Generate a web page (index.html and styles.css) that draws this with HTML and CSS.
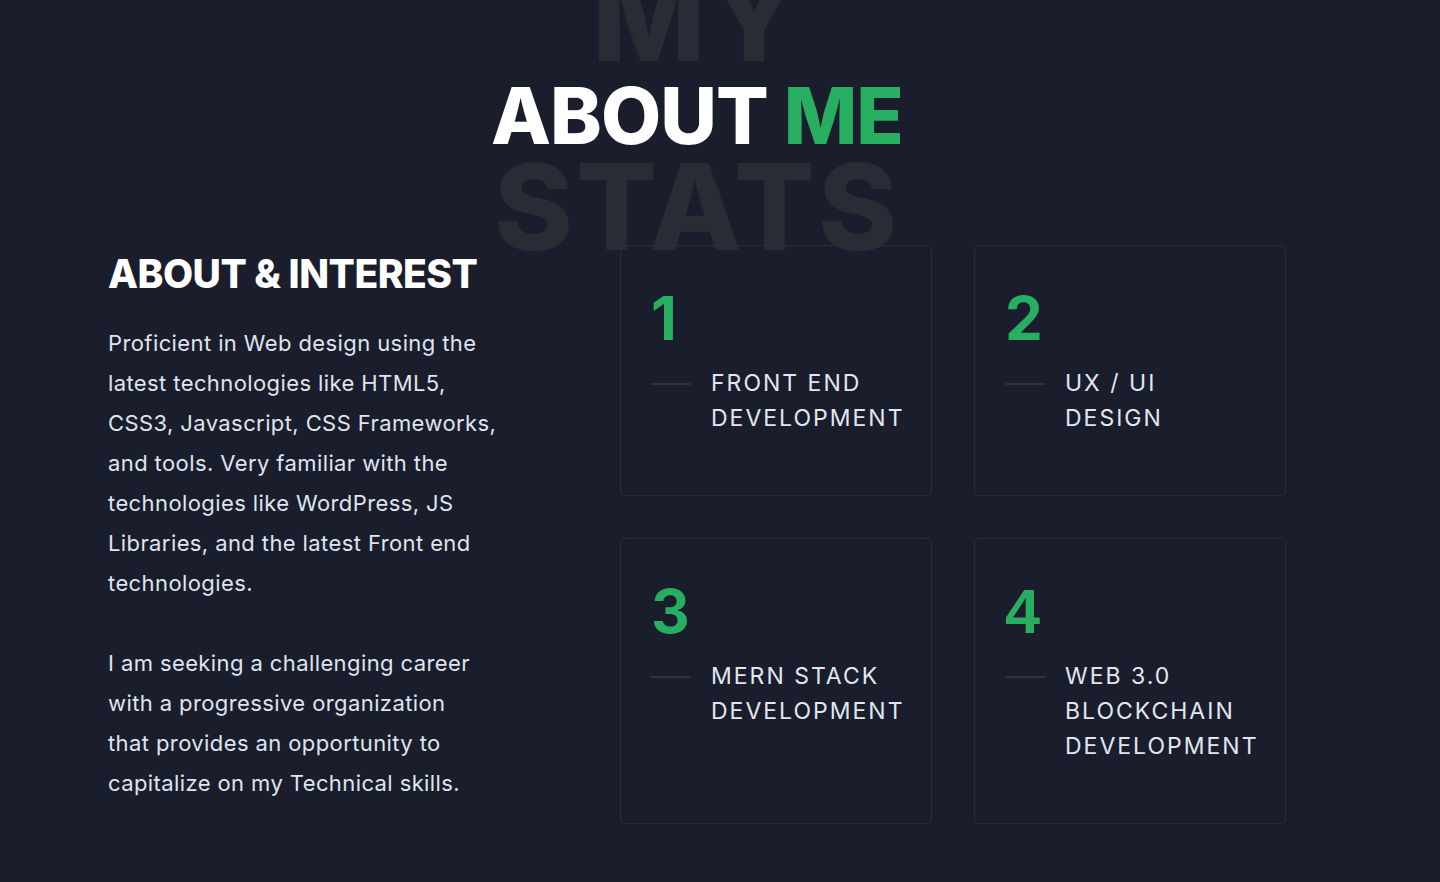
FILE: index.html
```html
<!DOCTYPE html>
<html lang="en">
<head>
<meta charset="utf-8">
<title>About Me</title>
<link rel="stylesheet" href="styles.css">
</head>
<body>
<section class="about">
  <header class="heading">
    <div class="bg-text" aria-hidden="true"><span class="bg-my">MY</span><span class="bg-stats">STATS</span></div>
    <h1 class="title">ABOUT <span class="accent">ME</span></h1>
  </header>
  <div class="content">
    <div class="intro">
      <h2 class="intro-title">ABOUT &amp; INTEREST</h2>
      <p class="intro-text">Proficient in Web design using the<br>latest technologies like HTML5,<br>CSS3, Javascript, CSS Frameworks,<br>and tools. Very familiar with the<br>technologies like WordPress, JS<br>Libraries, and the latest Front end<br>technologies.</p>
      <p class="intro-text">I am seeking a challenging career<br>with a progressive organization<br>that provides an opportunity to<br>capitalize on my Technical skills.</p>
    </div>
    <div class="stats">
      <div class="card">
        <div class="num">1</div>
        <div class="label"><span class="dash"></span><span class="label-text">FRONT END<br>DEVELOPMENT</span></div>
      </div>
      <div class="card">
        <div class="num">2</div>
        <div class="label"><span class="dash"></span><span class="label-text">UX / UI<br>DESIGN</span></div>
      </div>
      <div class="card">
        <div class="num">3</div>
        <div class="label"><span class="dash"></span><span class="label-text">MERN STACK<br>DEVELOPMENT</span></div>
      </div>
      <div class="card">
        <div class="num num-alt">4</div>
        <div class="label"><span class="dash"></span><span class="label-text">WEB 3.0<br>BLOCKCHAIN<br>DEVELOPMENT</span></div>
      </div>
    </div>
  </div>
</section>
</body>
</html>
```
FILE: styles.css
```css
* { box-sizing: border-box; }
html, body {
  margin: 0;
  padding: 0;
  background: #1a1d2b;
}
body {
  font-family: "Inter", "Open Sans", sans-serif;
  color: #dfe4ee;
  height: 882px;
  overflow: hidden;
}
.about {
  padding: 0 108px;
}
.heading {
  position: relative;
  height: 245px;
  display: flex;
  justify-content: center;
  padding-right: 46px;
}
.bg-text {
  position: absolute;
  left: 0;
  right: 46px;
  top: 0;
  display: flex;
  flex-direction: column;
  align-items: center;
  color: #282c35;
  font-weight: 800;
  font-size: 120px;
  line-height: 120px;
  letter-spacing: 3px;
  z-index: 0;
}
.bg-my {
  margin-top: -42px;
}
.bg-stats {
  margin-top: 69px;
}
.title {
  position: relative;
  z-index: 1;
  margin: 66px 0 0;
  font-size: 78px;
  font-weight: 800;
  line-height: 100px;
  height: 100px;
  color: #ffffff;
  letter-spacing: -1px;
}
.accent { color: #27ae60; }
.content {
  display: flex;
  align-items: flex-start;
  position: relative;
  z-index: 1;
}
.intro {
  width: 512px;
  flex: none;
  padding-top: 5px;
}
.intro-title {
  margin: 0 0 25px;
  font-size: 39px;
  font-weight: 800;
  line-height: 48px;
  color: #ffffff;
  letter-spacing: -0.5px;
}
.intro-text {
  margin: 0 0 40px;
  font-size: 22px;
  line-height: 40px;
  letter-spacing: 0.4px;
  color: #dfe4ee;
  white-space: nowrap;
}
.stats {
  display: grid;
  grid-template-columns: 312px 312px;
  column-gap: 42px;
  row-gap: 42px;
  align-content: start;
}
.card {
  border: 1px solid #2a2e38;
  border-radius: 5px;
  padding: 42px 30px 59px;
}
.num {
  font-size: 60px;
  font-weight: 700;
  line-height: 60px;
  color: #27ae60;
}
.num-alt {
  font-family: "Liberation Sans", Arial, sans-serif;
  font-size: 63px;
}
.label {
  display: flex;
  align-items: flex-start;
  margin-top: 18px;
}
.dash {
  flex: none;
  width: 40px;
  height: 2px;
  background: #2e323b;
  margin-top: 17px;
  margin-right: 20px;
}
.label-text {
  font-size: 23px;
  line-height: 35px;
  letter-spacing: 2px;
  color: #e1e7f1;
}
```
